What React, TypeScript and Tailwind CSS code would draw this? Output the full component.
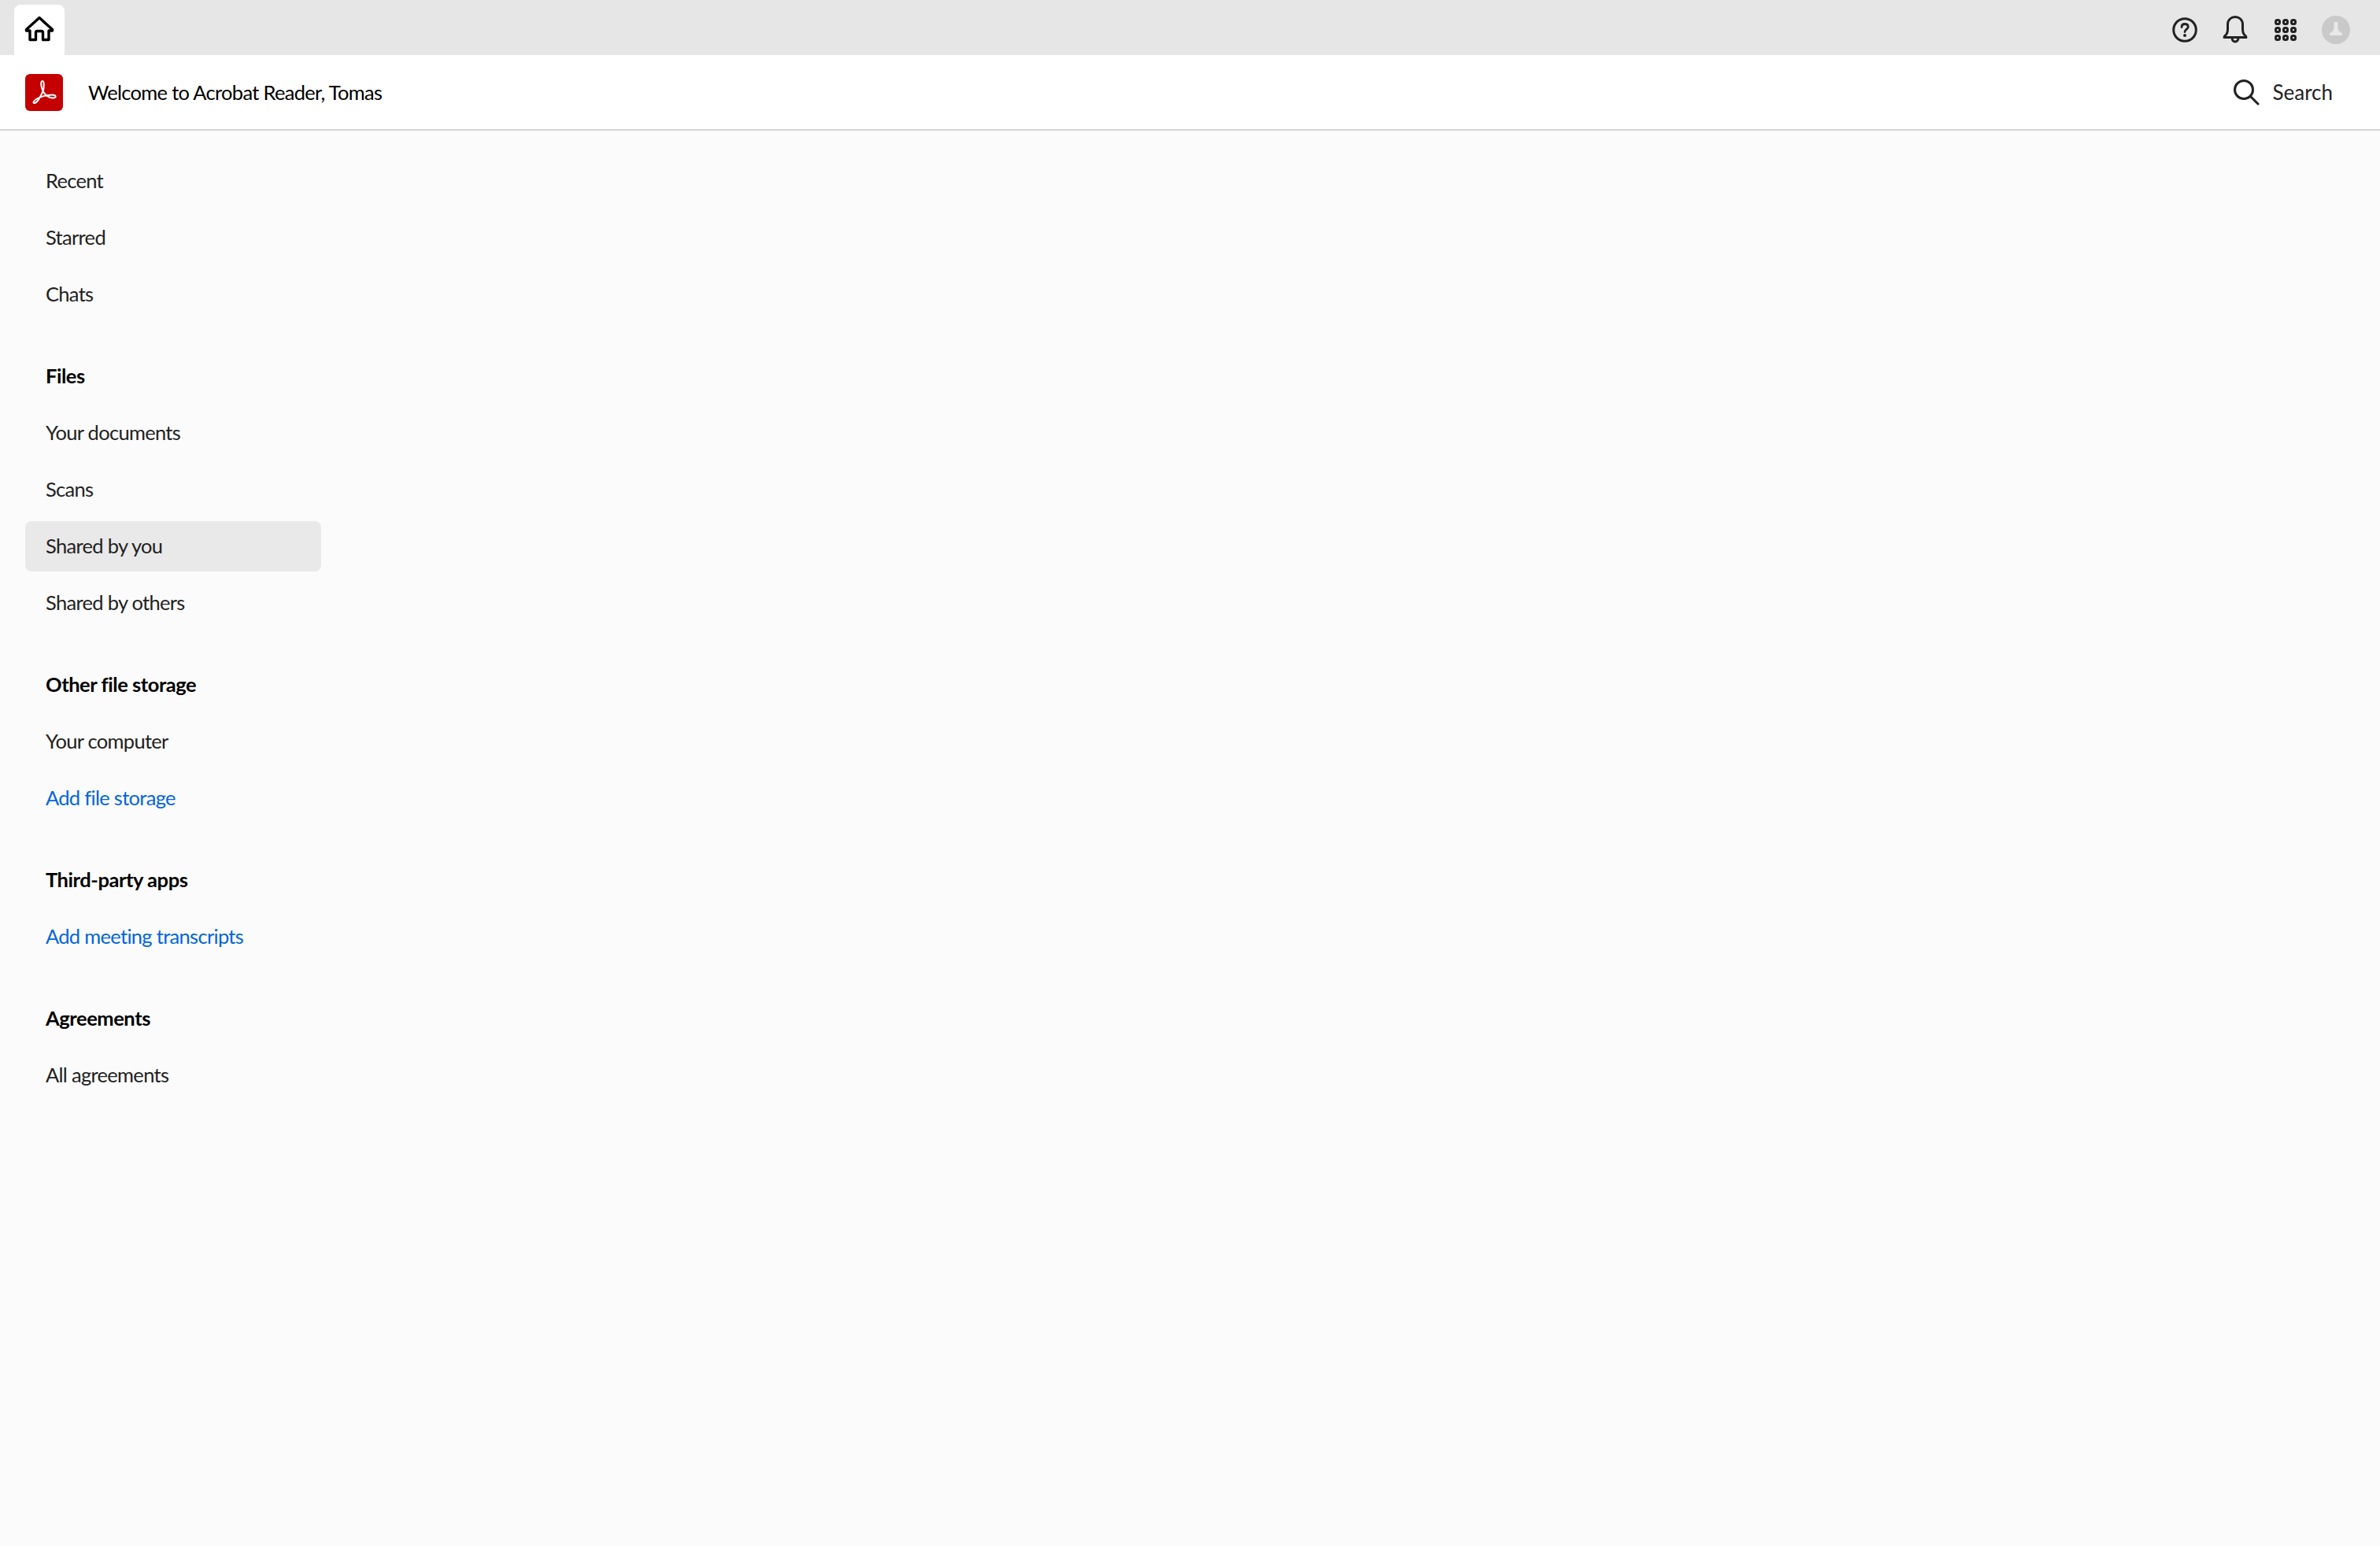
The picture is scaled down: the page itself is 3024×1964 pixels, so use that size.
import React from 'react';

const font = "font-['Lato',sans-serif]";

const HomeIcon = () => (
  <svg width="38" height="34" viewBox="0 0 38 34" fill="none" stroke="#000" strokeWidth="3.4" strokeLinejoin="round" strokeLinecap="round">
    <path d="M19 2.500 L35.500 17.500 L35.500 19 L31 19 L31 30.500 L23.500 30.500 L23.500 21.500 Q23.500 19.500 21.500 19.500 L16.500 19.500 Q14.500 19.500 14.500 21.500 L14.500 30.500 L7 30.500 L7 19 L2.500 19 L2.500 17.500 Z" />
  </svg>
);

const AcrobatLogo = () => (
  <div className="w-12 h-[47px] rounded-[6px] bg-[#c40000] flex items-center justify-center">
    <svg width="34" height="34" viewBox="0 0 34 34" fill="none" stroke="#fff" strokeWidth="2" strokeLinejoin="round">
      <path d="M4.500 31 C8 31 12 24 15.500 16 C17 12 17.500 3 15 3 C12 3 13 11 16 16.500 C18.500 21 23 24 28 24.500 C33 24.500 33 20.500 27 20.500 C21 20.500 11 23 7 26 C3.500 28.500 2.500 31 4.500 31 Z" />
    </svg>
  </div>
);

const HelpIcon = () => (
  <svg width="32" height="32" viewBox="0 0 32 32" fill="none">
    <circle cx="16" cy="16" r="14.300" stroke="#222" strokeWidth="3" />
    <path d="M12 12.500 C12 9.500 14 8.500 16 8.500 C18.500 8.500 20.200 10 20.200 12.200 C20.200 15 16 15.200 16 18.500" stroke="#222" strokeWidth="2.800" strokeLinecap="round" />
    <circle cx="16" cy="23" r="2" fill="#222" />
  </svg>
);

const BellIcon = () => (
  <svg width="32" height="36" viewBox="0 0 32 36" fill="none" stroke="#222" strokeWidth="3" strokeLinejoin="round">
    <path d="M2 27.500 Q2 26 3.500 25 Q6.500 22.500 6.500 17 L6.500 11 C6.500 5 11 1.500 16 1.500 C21 1.500 25.500 5 25.500 11 L25.500 17 Q25.500 22.500 28.500 25 Q30 26 30 27.500 Z" />
    <path d="M12 28 C12 34.500 20 34.500 20 28" />
  </svg>
);

const AppsIcon = () => (
  <svg width="28" height="28" viewBox="0 0 28 28" fill="none" stroke="#222" strokeWidth="3">
    {[1.500, 11.500, 21.500].map((y) =>
      [1.500, 11.500, 21.500].map((x) => <rect key={`${x}-${y}`} x={x} y={y} width="5" height="5" rx="2" />)
    )}
  </svg>
);

const SearchIcon = () => (
  <svg width="34" height="34" viewBox="0 0 34 34" fill="none" stroke="#222" strokeWidth="3" strokeLinecap="round">
    <circle cx="14" cy="14" r="11.500" />
    <path d="M22.500 22.500 L32 32" />
  </svg>
);

const Avatar = () => (
  <div className="w-9 h-9 rounded-full bg-[#c9c9c9] flex items-center justify-center">
    <svg width="20" height="22" viewBox="0 0 20 22" fill="#e8e8e8">
      <path d="M7.500 1 L12.500 1 L12.500 9 Q13 13 18 15 L18 18 L2 18 L2 15 Q7 13 7.500 9 Z" />
    </svg>
  </div>
);

const NavItem = ({ label, active, link }: { label: string; active?: boolean; link?: boolean }) => (
  <div
    className={`h-16 flex items-center pl-[26px] pb-[2px] rounded-[8px] ${active ? 'bg-[#e9e9e9]' : ''} ${link ? 'text-[#0265dc]' : 'text-[#222222]'}`}
  >
    {label}
  </div>
);

const SectionTitle = ({ label }: { label: string }) => (
  <div className="h-16 flex items-center pl-[26px] pb-[2px] font-bold tracking-[-0.45px] text-black">{label}</div>
);

const App: React.FC = () => {
  return (
    <div className={`w-[3024px] h-[1964px] bg-[#fbfbfb] flex flex-col text-[25.5px] tracking-[-0.7px] overflow-hidden ${font}`}>
      {/* Top tab bar */}
      <div className="h-[70px] bg-[#e6e6e6] flex items-end justify-between shrink-0">
        <div className="ml-[18px] w-16 h-16 bg-white rounded-t-[8px] flex items-center justify-center pb-[3px]">
          <HomeIcon />
        </div>
        <div className="flex items-center h-full pr-6 pt-[6px]">
          <div className="w-16 flex justify-center"><HelpIcon /></div>
          <div className="w-16 flex justify-center"><BellIcon /></div>
          <div className="w-16 flex justify-center"><AppsIcon /></div>
          <div className="w-16 flex justify-center"><Avatar /></div>
        </div>
      </div>

      {/* Header */}
      <div className="h-[96px] bg-white border-b-2 border-[#d5d5d5] flex items-center justify-between pl-8 pr-[60px] shrink-0">
        <div className="flex items-center gap-8">
          <AcrobatLogo />
          <span className="text-black pt-[1px]">Welcome to Acrobat Reader, Tomas</span>
        </div>
        <div className="flex items-center gap-4 text-[#222222] text-[26px] tracking-normal">
          <SearchIcon />
          <span className="pt-[1px]">Search</span>
        </div>
      </div>

      {/* Sidebar */}
      <div className="w-[376px] ml-8 pt-8 flex flex-col gap-10">
        <div className="flex flex-col gap-2">
          <NavItem label="Recent" />
          <NavItem label="Starred" />
          <NavItem label="Chats" />
        </div>
        <div className="flex flex-col gap-2">
          <SectionTitle label="Files" />
          <NavItem label="Your documents" />
          <NavItem label="Scans" />
          <NavItem label="Shared by you" active />
          <NavItem label="Shared by others" />
        </div>
        <div className="flex flex-col gap-2">
          <SectionTitle label="Other file storage" />
          <NavItem label="Your computer" />
          <NavItem label="Add file storage" link />
        </div>
        <div className="flex flex-col gap-2">
          <SectionTitle label="Third-party apps" />
          <NavItem label="Add meeting transcripts" link />
        </div>
        <div className="flex flex-col gap-2">
          <SectionTitle label="Agreements" />
          <NavItem label="All agreements" />
        </div>
      </div>
    </div>
  );
};

export default App;
